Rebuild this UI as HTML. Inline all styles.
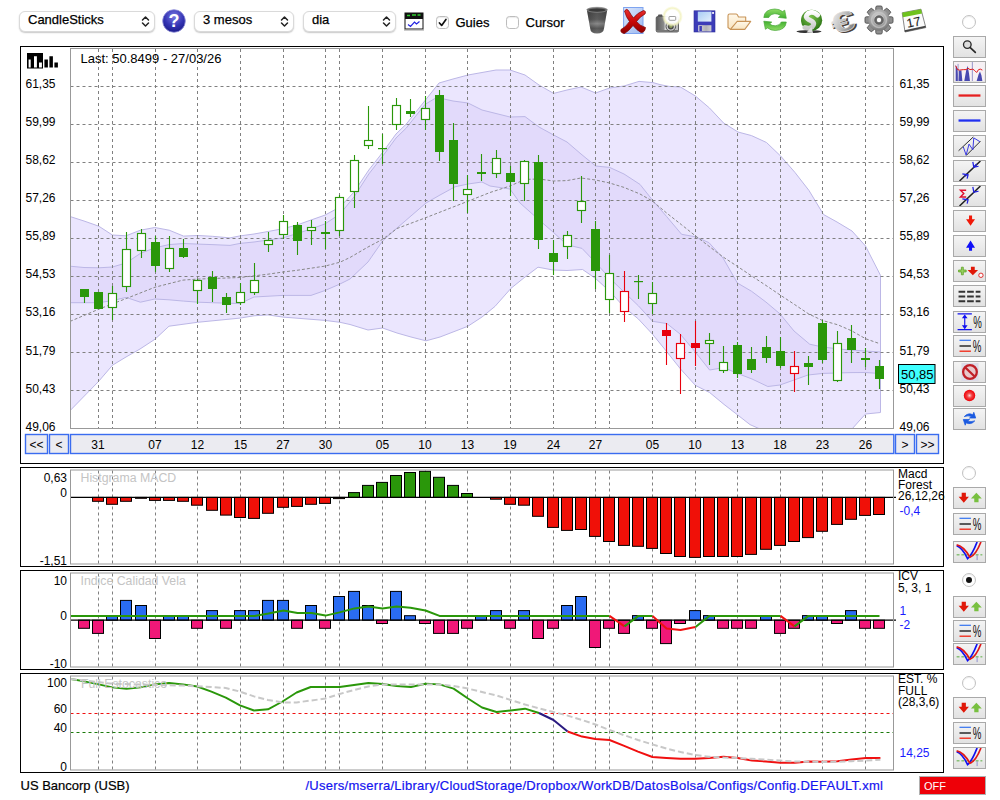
<!DOCTYPE html>
<html><head><meta charset="utf-8"><title>US Bancorp (USB)</title>
<style>
html,body{margin:0;padding:0;background:#fff;}
body{width:1000px;height:800px;position:relative;overflow:hidden;font-family:"Liberation Sans",sans-serif;font-size:13px;color:#000;}
.abs{position:absolute;}
.sel{position:absolute;top:11px;height:18.500px;border:1px solid #dadada;border-radius:6px;background:#fff;box-shadow:0 1px 1.5px rgba(0,0,0,.22);font-size:13px;line-height:18.500px;-webkit-text-stroke:0.25px #000;}
.sel span{position:absolute;left:8px;top:-1px;white-space:nowrap;}
.sel svg{position:absolute;right:4px;top:3px;}
.cb{position:absolute;top:15.5px;width:11.200px;height:11.200px;border:1px solid #bdbdbd;border-radius:3.5px;background:#fff;box-shadow:inset 0 1px 1px rgba(0,0,0,.08);}
.lbl{position:absolute;top:14.500px;font-size:13px;line-height:16px;-webkit-text-stroke:0.25px #000;white-space:nowrap;}
.radio{position:absolute;width:12px;height:12px;border:1px solid #c2c2c2;border-radius:50%;background:#fff;box-shadow:inset 0 1px 1px rgba(0,0,0,.08);}
.sb{position:absolute;left:953px;width:31px;height:20px;border:1px solid #a9a9a9;background:linear-gradient(#f4f4f4,#e2e2e2);overflow:hidden;}
.sb svg{position:absolute;left:0;top:0;}
.status{position:absolute;top:778px;font-size:13px;line-height:15px;white-space:nowrap;-webkit-text-stroke:0.2px;}
</style></head>
<body>
<div class="sel" style="left:19px;width:134px"><span>CandleSticks</span><svg width="9" height="13" viewBox="0 0 9 13"><path d="M1.5 5L4.5 2L7.5 5M1.5 8L4.5 11L7.5 8" fill="none" stroke="#222" stroke-width="1.5" stroke-linecap="round" stroke-linejoin="round"/></svg></div>
<svg class="abs" style="left:162px;top:9px" width="24" height="24" viewBox="0 0 24 24"><defs><radialGradient id="hg" cx="50%" cy="30%" r="70%"><stop offset="0" stop-color="#7a7ae0"/><stop offset="0.6" stop-color="#3434b4"/><stop offset="1" stop-color="#1c1c8a"/></radialGradient></defs><circle cx="12" cy="12" r="11.3" fill="url(#hg)" stroke="#8a8ad8" stroke-width="0.8"/><text x="12" y="18" text-anchor="middle" font-family="Liberation Sans, sans-serif" font-weight="bold" font-size="18" fill="#fff">?</text></svg>
<div class="sel" style="left:194px;width:98px"><span>3 mesos</span><svg width="9" height="13" viewBox="0 0 9 13"><path d="M1.5 5L4.5 2L7.5 5M1.5 8L4.5 11L7.5 8" fill="none" stroke="#222" stroke-width="1.5" stroke-linecap="round" stroke-linejoin="round"/></svg></div>
<div class="sel" style="left:303px;width:91px"><span>dia</span><svg width="9" height="13" viewBox="0 0 9 13"><path d="M1.5 5L4.5 2L7.5 5M1.5 8L4.5 11L7.5 8" fill="none" stroke="#222" stroke-width="1.5" stroke-linecap="round" stroke-linejoin="round"/></svg></div>
<svg class="abs" style="left:404px;top:12px" width="20" height="19" viewBox="0 0 20 19"><rect x="0.5" y="0.5" width="19" height="5.5" fill="#111"/><path d="M3 3.5h3M8 3h4M13.5 3h3" stroke="#2fd02f" stroke-width="1.4"/><rect x="1" y="6.5" width="18" height="10.5" fill="#fff" stroke="#111" stroke-width="1"/><path d="M4 12.5l2.5 2l4-4.5l2 2l3-2.5" fill="none" stroke="#2020e0" stroke-width="1.2"/><rect x="0" y="17.5" width="20" height="1" fill="#999"/></svg>
<div class="cb" style="left:435.5px"><svg width="11.2" height="11.2" viewBox="0 0 12 12" style="position:absolute;left:0;top:0"><path d="M2.6 6.4L5 9L9.6 2.6" fill="none" stroke="#111" stroke-width="1.8" stroke-linecap="round" stroke-linejoin="round"/></svg></div>
<div class="lbl" style="left:455.5px">Guies</div>
<div class="cb" style="left:505.5px"></div>
<div class="lbl" style="left:525.5px">Cursor</div>
<!-- trash -->
<svg class="abs" style="left:585px;top:6px" width="24" height="29" viewBox="0 0 24 29"><defs><linearGradient id="tg" x1="0" y1="0" x2="0" y2="1"><stop offset="0" stop-color="#4c4c4c"/><stop offset="0.45" stop-color="#5e5e5e"/><stop offset="0.62" stop-color="#8a8a8a"/><stop offset="0.8" stop-color="#5a5a5a"/><stop offset="1" stop-color="#6e6e6e"/></linearGradient><linearGradient id="tg2" x1="0" x2="1"><stop offset="0" stop-color="#000" stop-opacity="0.25"/><stop offset="0.5" stop-color="#000" stop-opacity="0"/><stop offset="1" stop-color="#000" stop-opacity="0.2"/></linearGradient></defs><path d="M1.800 3.500Q12 0 22.300 3.500L19 22.500Q18.500 27.500 12 27.500Q5.500 27.500 5.200 22.500Z" fill="url(#tg)"/><path d="M1.800 3.500Q12 0 22.300 3.500L19 22.500Q18.500 27.500 12 27.500Q5.500 27.500 5.200 22.500Z" fill="url(#tg2)"/><ellipse cx="12.050" cy="3.800" rx="10.200" ry="2.500" fill="#6c6c6c" stroke="#8c8c8c" stroke-width="0.7"/><ellipse cx="12.050" cy="4.100" rx="8.600" ry="1.700" fill="#3a3a3a"/></svg>
<!-- red X on doc -->
<svg class="abs" style="left:619px;top:6px" width="28" height="29" viewBox="0 0 28 29"><defs><linearGradient id="dgr" x1="0" y1="0" x2="1" y2="1"><stop offset="0" stop-color="#dce8fc"/><stop offset="1" stop-color="#9cb8f0"/></linearGradient><linearGradient id="xg" x1="0" y1="0" x2="0" y2="1"><stop offset="0" stop-color="#e83030"/><stop offset="0.5" stop-color="#c80808"/><stop offset="1" stop-color="#8c0000"/></linearGradient></defs><rect x="4.600" y="1.500" width="19.400" height="26" fill="url(#dgr)" stroke="#7ea4f0" stroke-width="1"/><path d="M5.500 5Q7.500 2 9.500 4.500Q12 9 14.500 12Q18 7 24.500 4.500Q27.500 5 26 8Q21 10.500 17.500 15.500Q21 20 26.500 21.500Q26 26.500 22 26.500Q17.500 24 14 19.500Q10 25 5.500 27.500Q1 27 2 23.500Q7 21 10.500 15.500Q7 11 5.500 5Z" fill="url(#xg)" stroke="#7a0000" stroke-width="0.7" stroke-linejoin="round"/></svg>
<!-- camera -->
<svg class="abs" style="left:655px;top:5px" width="30" height="30" viewBox="0 0 30 30"><defs><radialGradient id="fg"><stop offset="0" stop-color="#fff"/><stop offset="0.62" stop-color="#ffffff" stop-opacity="0.95"/><stop offset="0.8" stop-color="#f2f2c0" stop-opacity="0.9"/><stop offset="1" stop-color="#f4f4c0" stop-opacity="0"/></radialGradient><linearGradient id="cb" x1="0" x2="1"><stop offset="0" stop-color="#5c5c5c"/><stop offset="0.35" stop-color="#8c8c8c"/><stop offset="0.4" stop-color="#d8d8d8"/><stop offset="1" stop-color="#bcbcbc"/></linearGradient></defs><rect x="1.200" y="11.500" width="22.300" height="15.500" rx="1.500" fill="url(#cb)" stroke="#555" stroke-width="0.9"/><path d="M2.500 11.500L3.500 9.500H7L8 11.500Z" fill="#555"/><rect x="1.200" y="25" width="22.300" height="2" fill="#777"/><circle cx="15.800" cy="21.400" r="4.800" fill="#d0d0d0" stroke="#555" stroke-width="1"/><circle cx="15.800" cy="21.400" r="3" fill="#4a4a4a"/><circle cx="15.800" cy="21.400" r="1.600" fill="#8a9a5a"/><circle cx="17.400" cy="11.500" r="10.500" fill="url(#fg)"/><rect x="14" y="11.500" width="6.700" height="3.800" rx="0.800" fill="#fff" stroke="#777" stroke-width="0.7"/></svg>
<!-- floppy -->
<svg class="abs" style="left:693px;top:10px" width="23" height="23" viewBox="0 0 23 23"><defs><linearGradient id="fl" x1="0" y1="0" x2="1" y2="1"><stop offset="0" stop-color="#a8ccf4"/><stop offset="1" stop-color="#e4f0fc"/></linearGradient><linearGradient id="fs" x1="0" x2="1"><stop offset="0" stop-color="#d8d8dc"/><stop offset="0.6" stop-color="#b0b0b4"/><stop offset="1" stop-color="#d0d0d4"/></linearGradient></defs><rect x="1" y="0.800" width="21" height="21.200" fill="#3c3cb8" stroke="#2c2c98" stroke-width="0.6"/><rect x="4.800" y="1.600" width="13.600" height="10" fill="url(#fl)"/><rect x="5.200" y="15.200" width="13.200" height="6.300" fill="url(#fs)"/><rect x="6.400" y="16" width="2.500" height="5" fill="#3c3cb8"/><rect x="19.200" y="2" width="1.700" height="1.900" fill="#fff"/></svg>
<!-- folder -->
<svg class="abs" style="left:727px;top:12.500px" width="25" height="18" viewBox="0 0 25 18"><defs><linearGradient id="fo" x1="0" y1="0" x2="0" y2="1"><stop offset="0" stop-color="#fff8ea"/><stop offset="1" stop-color="#f8e4c0"/></linearGradient></defs><path d="M3.400 16.400L1 14.500V2.800Q1 1 2.600 1H9.300Q10.300 1 11.500 4H18.700V8.400" fill="url(#fo)" stroke="#c89458" stroke-width="1.1" stroke-linejoin="round"/><path d="M10.200 8.400H23.700L17.800 16.400H3.400Z" fill="url(#fo)" stroke="#c89458" stroke-width="1.1" stroke-linejoin="round"/></svg>
<!-- refresh green -->
<svg class="abs" style="left:762px;top:7px" width="27" height="26" viewBox="0 0 27 26"><defs><linearGradient id="rg" x1="0" y1="0" x2="0" y2="1"><stop offset="0" stop-color="#8fdc66"/><stop offset="1" stop-color="#3fae2e"/></linearGradient></defs><g fill="url(#rg)" stroke="#46a636" stroke-width="0.7" stroke-linejoin="round"><path d="M1.8 10.500Q2.500 2.300 12.800 2Q17.500 2 20.500 4.600L22.700 3.200L24.300 11.300L16.300 10.400L18.600 8.500Q16 6.600 12.800 6.700Q8 7 6.800 10.500Z"/><path d="M1.8 10.500Q2.500 2.300 12.800 2Q17.500 2 20.500 4.600L22.700 3.200L24.300 11.300L16.300 10.400L18.600 8.500Q16 6.600 12.800 6.700Q8 7 6.800 10.500Z" transform="rotate(180 13.050 12.750)"/></g></svg>
<!-- dollar ball -->
<svg class="abs" style="left:796px;top:8px" width="28" height="26" viewBox="0 0 28 26"><defs><radialGradient id="dg" cx="45%" cy="35%" r="65%"><stop offset="0" stop-color="#7cc44c"/><stop offset="1" stop-color="#2c7416"/></radialGradient><linearGradient id="sg" x1="0" y1="0" x2="0" y2="1"><stop offset="0" stop-color="#ffffff"/><stop offset="1" stop-color="#c8c8c8"/></linearGradient></defs><ellipse cx="13" cy="23.600" rx="12.500" ry="1.500" fill="#111" opacity="0.85"/><circle cx="15.600" cy="12.300" r="10.600" fill="url(#dg)"/><path d="M21.500 7Q17 2.500 12 5.500Q7.500 9.500 14.500 12.500Q20 15 16 19Q13 21 9 19.500" fill="none" stroke="url(#sg)" stroke-width="5" stroke-linecap="round"/><path d="M10.500 24.500l5-5.500l1.500 6z" fill="#ddd"/></svg>
<!-- euro -->
<svg class="abs" style="left:829px;top:5px" width="32" height="32" viewBox="0 0 32 32"><defs><linearGradient id="eg" x1="0" y1="0" x2="1" y2="1"><stop offset="0" stop-color="#ffffff"/><stop offset="0.45" stop-color="#c4c4c4"/><stop offset="1" stop-color="#606060"/></linearGradient></defs><g transform="rotate(-16 16 16)"><text transform="translate(3.500 27) scale(1.42 0.960)" font-family="Liberation Sans, sans-serif" font-weight="bold" font-size="29" fill="#4a423c" stroke="#4a423c" stroke-width="1.2">€</text><text transform="translate(2.300 25.800) scale(1.42 0.960)" font-family="Liberation Sans, sans-serif" font-weight="bold" font-size="29" fill="url(#eg)" stroke="#dcdcdc" stroke-width="0.600">€</text></g></svg>
<!-- gear -->
<svg class="abs" style="left:864px;top:5px" width="30" height="30" viewBox="-15 -15 30 30"><defs><radialGradient id="gg" cx="45%" cy="35%" r="70%"><stop offset="0" stop-color="#d4d4d4"/><stop offset="0.6" stop-color="#a0a0a0"/><stop offset="1" stop-color="#6c6c6c"/></radialGradient></defs><g fill="#8e8e8e" stroke="#505050" stroke-width="0.9" stroke-linejoin="round"><rect x="-3.200" y="-14" width="6.400" height="8" rx="1.400"/><rect x="-3.200" y="-14" width="6.400" height="8" rx="1.400" transform="rotate(45)"/><rect x="-3.200" y="-14" width="6.400" height="8" rx="1.400" transform="rotate(90)"/><rect x="-3.200" y="-14" width="6.400" height="8" rx="1.400" transform="rotate(135)"/><rect x="-3.200" y="-14" width="6.400" height="8" rx="1.400" transform="rotate(180)"/><rect x="-3.200" y="-14" width="6.400" height="8" rx="1.400" transform="rotate(225)"/><rect x="-3.200" y="-14" width="6.400" height="8" rx="1.400" transform="rotate(270)"/><rect x="-3.200" y="-14" width="6.400" height="8" rx="1.400" transform="rotate(315)"/></g><circle r="10.800" fill="url(#gg)"/><circle r="7.500" fill="none" stroke="#c8c8c8" stroke-width="1.500" opacity="0.7"/><circle r="4.200" fill="#6a6a6a" stroke="#505050" stroke-width="0.8"/><circle r="2.200" fill="#fff"/></svg>
<!-- calendar -->
<svg class="abs" style="left:899px;top:6px" width="30" height="30" viewBox="0 0 30 30"><path d="M3.200 6.800L22 3.200L26.800 21.600L6 26Z" fill="#fbfbfb" stroke="#7a7a7a" stroke-width="0.9" stroke-linejoin="round"/><path d="M3.200 6.800L22 3.200L23.100 7.400L4 11.200Z" fill="#6fc21e"/><path d="M5.600 24.200L26.400 19.800L26.800 21.600L6 26Z" fill="#444"/><text transform="translate(8.600 21.800) rotate(-11)" font-family="Liberation Sans, sans-serif" font-size="12.500" fill="#1a1a1a" stroke="#1a1a1a" stroke-width="0.120">17</text></svg>
<svg class="abs" style="left:0;top:0" width="1000" height="800" viewBox="0 0 1000 800" font-family="Liberation Sans, sans-serif" font-size="12">
<defs>
<clipPath id="cm"><rect x="71" y="49" width="822" height="379"/></clipPath>
</defs>
<rect x="20.5" y="46.5" width="923" height="417.0" fill="#fff" stroke="#000" stroke-width="1"/>
<rect x="20.5" y="467.5" width="923" height="99.0" fill="#fff" stroke="#000" stroke-width="1"/>
<rect x="20.5" y="570.5" width="923" height="99.0" fill="#fff" stroke="#000" stroke-width="1"/>
<rect x="20.5" y="673.5" width="923" height="99.0" fill="#fff" stroke="#000" stroke-width="1"/>
<g clip-path="url(#cm)">
<polygon points="70.0,216.5 84.0,221.0 98.8,226.2 112.4,235.0 126.0,235.8 140.4,230.2 154.8,227.5 169.2,230.2 183.6,236.1 198.0,235.5 212.4,236.3 230.0,237.9 240.0,235.9 254.0,234.0 268.0,231.5 283.0,228.7 297.0,225.0 311.0,220.0 325.0,215.1 340.0,207.0 354.0,192.0 368.8,170.0 382.8,152.2 396.0,134.0 406.3,124.0 425.0,100.6 439.0,83.0 453.0,79.0 468.0,75.0 482.0,72.5 496.0,70.0 510.0,70.0 525.0,75.0 539.0,85.0 553.6,93.4 567.0,90.0 581.0,87.0 595.6,93.0 609.6,88.0 624.0,86.0 639.0,81.4 653.0,82.6 660.0,84.6 669.0,86.4 680.4,87.0 695.4,96.0 709.5,108.0 723.6,123.0 738.0,132.0 751.5,135.6 766.5,142.5 780.6,156.0 795.0,172.5 809.0,190.5 823.5,214.5 837.0,222.0 852.0,231.0 865.5,246.0 880.5,275.4 880.5,412.5 865.5,414.0 860.0,420.0 852.0,429.0 837.0,430.0 822.0,428.5 800.0,433.0 765.0,431.0 757.0,427.7 750.0,424.6 737.7,415.0 724.0,404.4 709.6,392.5 695.4,385.4 680.4,368.8 667.0,352.0 652.6,334.3 638.4,319.0 624.0,307.0 610.0,291.6 595.6,278.5 582.6,269.5 567.0,270.5 553.0,270.0 538.0,267.2 525.0,277.0 511.0,288.3 495.0,306.4 482.0,317.0 467.8,326.3 453.0,332.0 440.0,337.0 426.0,340.8 411.0,337.0 397.0,333.0 382.6,328.0 368.0,330.0 350.0,324.5 340.0,322.3 325.0,320.4 283.0,317.1 268.0,314.9 254.0,315.8 240.0,318.1 197.5,322.3 169.0,326.2 155.0,339.2 140.0,349.0 126.0,357.0 112.5,365.2 98.5,381.5 70.0,410.7" fill="#ebe6fe"/>
<polygon points="70.0,266.2 84.0,267.5 98.8,267.8 112.4,267.0 126.0,263.0 140.4,253.4 154.8,247.8 169.0,244.6 183.6,243.5 198.0,244.1 212.0,244.6 230.0,245.4 240.0,243.4 254.0,242.0 268.0,240.0 283.0,237.8 297.0,233.6 311.0,229.0 325.0,223.9 340.0,214.0 354.0,197.0 368.8,174.0 382.8,156.0 396.0,138.0 406.3,128.0 425.0,104.4 434.4,98.8 439.0,96.5 444.0,99.0 453.0,101.0 468.0,103.0 482.0,110.0 496.0,113.5 510.0,117.0 525.0,116.6 539.0,127.0 553.6,135.0 567.0,142.0 581.0,154.0 595.6,166.0 609.6,167.4 624.0,174.0 640.0,184.4 652.3,199.9 666.6,216.5 681.6,234.3 695.0,236.7 708.9,242.6 723.0,258.0 737.4,283.0 751.6,291.3 765.9,302.0 780.0,313.9 794.0,331.0 809.7,344.2 822.5,347.0 844.0,349.5 865.3,351.0 880.5,352.0 880.5,373.5 865.3,372.5 851.0,372.6 823.0,373.4 808.0,375.0 794.0,380.0 780.0,385.0 767.8,386.5 752.0,379.0 737.7,373.5 724.0,367.6 709.6,370.0 695.4,352.1 680.4,334.3 667.0,323.6 652.6,321.3 638.4,305.8 624.0,292.0 610.0,278.5 596.0,263.0 582.0,248.4 567.0,244.8 553.0,232.0 538.0,219.0 520.0,203.0 510.0,189.0 490.0,186.0 482.0,182.0 468.0,184.0 455.0,186.8 440.0,195.0 426.0,203.0 397.0,228.0 382.6,241.0 368.0,262.0 350.0,279.0 340.0,284.0 325.0,290.5 311.0,295.4 283.0,295.4 254.0,297.0 240.0,303.5 230.0,303.3 212.0,302.7 198.0,302.2 183.6,301.1 169.0,299.8 154.8,299.0 140.4,302.2 126.0,297.4 112.4,300.6 98.8,302.7 70.0,302.7" fill="#e2dafb"/>
<polyline points="70.0,216.5 84.0,221.0 98.8,226.2 112.4,235.0 126.0,235.8 140.4,230.2 154.8,227.5 169.2,230.2 183.6,236.1 198.0,235.5 212.4,236.3 230.0,237.9 240.0,235.9 254.0,234.0 268.0,231.5 283.0,228.7 297.0,225.0 311.0,220.0 325.0,215.1 340.0,207.0 354.0,192.0 368.8,170.0 382.8,152.2 396.0,134.0 406.3,124.0 425.0,100.6 439.0,83.0 453.0,79.0 468.0,75.0 482.0,72.5 496.0,70.0 510.0,70.0 525.0,75.0 539.0,85.0 553.6,93.4 567.0,90.0 581.0,87.0 595.6,93.0 609.6,88.0 624.0,86.0 639.0,81.4 653.0,82.6 660.0,84.6 669.0,86.4 680.4,87.0 695.4,96.0 709.5,108.0 723.6,123.0 738.0,132.0 751.5,135.6 766.5,142.5 780.6,156.0 795.0,172.5 809.0,190.5 823.5,214.5 837.0,222.0 852.0,231.0 865.5,246.0 880.5,275.4" fill="none" stroke="#bcb7e6" stroke-width="1"/>
<polyline points="70.0,266.2 84.0,267.5 98.8,267.8 112.4,267.0 126.0,263.0 140.4,253.4 154.8,247.8 169.0,244.6 183.6,243.5 198.0,244.1 212.0,244.6 230.0,245.4 240.0,243.4 254.0,242.0 268.0,240.0 283.0,237.8 297.0,233.6 311.0,229.0 325.0,223.9 340.0,214.0 354.0,197.0 368.8,174.0 382.8,156.0 396.0,138.0 406.3,128.0 425.0,104.4 434.4,98.8 439.0,96.5 444.0,99.0 453.0,101.0 468.0,103.0 482.0,110.0 496.0,113.5 510.0,117.0 525.0,116.6 539.0,127.0 553.6,135.0 567.0,142.0 581.0,154.0 595.6,166.0 609.6,167.4 624.0,174.0 640.0,184.4 652.3,199.9 666.6,216.5 681.6,234.3 695.0,236.7 708.9,242.6 723.0,258.0 737.4,283.0 751.6,291.3 765.9,302.0 780.0,313.9 794.0,331.0 809.7,344.2 822.5,347.0 844.0,349.5 865.3,351.0 880.5,352.0" fill="none" stroke="#bcb7e6" stroke-width="1"/>
<polyline points="70.0,302.7 98.8,302.7 112.4,300.6 126.0,297.4 140.4,302.2 154.8,299.0 169.0,299.8 183.6,301.1 198.0,302.2 212.0,302.7 230.0,303.3 240.0,303.5 254.0,297.0 283.0,295.4 311.0,295.4 325.0,290.5 340.0,284.0 350.0,279.0 368.0,262.0 382.6,241.0 397.0,228.0 426.0,203.0 440.0,195.0 455.0,186.8 468.0,184.0 482.0,182.0 490.0,186.0 510.0,189.0 520.0,203.0 538.0,219.0 553.0,232.0 567.0,244.8 582.0,248.4 596.0,263.0 610.0,278.5 624.0,292.0 638.4,305.8 652.6,321.3 667.0,323.6 680.4,334.3 695.4,352.1 709.6,370.0 724.0,367.6 737.7,373.5 752.0,379.0 767.8,386.5 780.0,385.0 794.0,380.0 808.0,375.0 823.0,373.4 851.0,372.6 865.3,372.5 880.5,373.5" fill="none" stroke="#bcb7e6" stroke-width="1"/>
<polyline points="70.0,410.7 98.5,381.5 112.5,365.2 126.0,357.0 140.0,349.0 155.0,339.2 169.0,326.2 197.5,322.3 240.0,318.1 254.0,315.8 268.0,314.9 283.0,317.1 325.0,320.4 340.0,322.3 350.0,324.5 368.0,330.0 382.6,328.0 397.0,333.0 411.0,337.0 426.0,340.8 440.0,337.0 453.0,332.0 467.8,326.3 482.0,317.0 495.0,306.4 511.0,288.3 525.0,277.0 538.0,267.2 553.0,270.0 567.0,270.5 582.6,269.5 595.6,278.5 610.0,291.6 624.0,307.0 638.4,319.0 652.6,334.3 667.0,352.0 680.4,368.8 695.4,385.4 709.6,392.5 724.0,404.4 737.7,415.0 750.0,424.6 757.0,427.7 765.0,431.0 800.0,433.0 822.0,428.5 837.0,430.0 852.0,429.0 860.0,420.0 865.5,414.0 880.5,412.5" fill="none" stroke="#bcb7e6" stroke-width="1"/>
<line x1="880.5" y1="275.4" x2="880.5" y2="412.5" stroke="#bcb7e6" stroke-width="1"/>
</g>
<path d="M98.5 49V428M112.5 49V428M155.5 49V428M197.5 49V428M240.5 49V428M283.5 49V428M325.5 49V428M339.5 49V428M382.5 49V428M425.5 49V428M467.5 49V428M510.5 49V428M553.5 49V428M595.5 49V428M609.5 49V428M652.5 49V428M695.5 49V428M737.5 49V428M780.5 49V428M822.5 49V428M865.5 49V428M70.5 86.5H893.5M70.5 124.5H893.5M70.5 162.5H893.5M70.5 200.5H893.5M70.5 238.5H893.5M70.5 276.5H893.5M70.5 314.5H893.5M70.5 352.5H893.5M70.5 390.5H893.5" stroke="#808080" stroke-width="1" stroke-dasharray="3 3" fill="none"/>
<polyline points="70.0,321.4 98.5,309.3 126.0,298.6 155.0,287.2 183.0,280.1 197.5,279.1 240.0,277.5 268.0,274.2 283.0,272.0 297.0,270.3 325.0,266.1 340.0,262.2 350.0,257.5 368.0,247.0 382.6,239.3 397.0,228.5 426.0,217.6 467.8,201.3 490.0,192.5 510.0,186.0 525.0,179.4 539.0,179.0 553.6,181.0 567.0,180.6 581.0,178.0 595.6,180.0 609.6,183.0 624.0,187.4 640.0,194.0 652.3,201.0 666.6,213.0 681.6,224.8 695.0,235.5 708.9,246.2 723.0,256.9 737.4,266.4 751.6,275.9 765.9,285.4 780.0,294.9 794.4,304.4 808.6,313.9 822.5,320.5 837.8,324.8 851.0,330.5 865.8,338.8 879.8,343.7" fill="none" stroke="#888" stroke-width="1" stroke-dasharray="3 2" clip-path="url(#cm)"/>
<line x1="84.5" y1="289" x2="84.5" y2="303" stroke="#2a970a" stroke-width="1.1"/>
<rect x="80" y="289" width="9" height="8" fill="#2a970a"/>
<line x1="98.5" y1="292" x2="98.5" y2="309" stroke="#2a970a" stroke-width="1.1"/>
<rect x="94" y="292" width="9" height="17" fill="#2a970a"/>
<line x1="112.5" y1="286" x2="112.5" y2="320" stroke="#2a970a" stroke-width="1.1"/>
<rect x="108.5" y="293.5" width="8" height="14.0" fill="#fff" stroke="#2a970a" stroke-width="1.15"/>
<line x1="126.5" y1="232" x2="126.5" y2="292" stroke="#2a970a" stroke-width="1.1"/>
<rect x="122.5" y="249.5" width="8" height="37.0" fill="#fff" stroke="#2a970a" stroke-width="1.15"/>
<line x1="141.5" y1="229" x2="141.5" y2="258" stroke="#2a970a" stroke-width="1.1"/>
<rect x="137.5" y="233.5" width="8" height="17.0" fill="#fff" stroke="#2a970a" stroke-width="1.15"/>
<line x1="155.5" y1="236" x2="155.5" y2="272" stroke="#2a970a" stroke-width="1.1"/>
<rect x="151" y="242" width="9" height="24" fill="#2a970a"/>
<line x1="169.5" y1="236" x2="169.5" y2="272" stroke="#2a970a" stroke-width="1.1"/>
<rect x="165.5" y="248.5" width="8" height="20.0" fill="#fff" stroke="#2a970a" stroke-width="1.15"/>
<line x1="183.5" y1="239" x2="183.5" y2="258" stroke="#2a970a" stroke-width="1.1"/>
<rect x="179" y="248" width="9" height="9" fill="#2a970a"/>
<line x1="197.5" y1="279" x2="197.5" y2="304" stroke="#2a970a" stroke-width="1.1"/>
<rect x="193.5" y="280.5" width="8" height="10.0" fill="#fff" stroke="#2a970a" stroke-width="1.15"/>
<line x1="212.5" y1="271" x2="212.5" y2="302" stroke="#2a970a" stroke-width="1.1"/>
<rect x="208" y="277" width="9" height="12" fill="#2a970a"/>
<line x1="226.5" y1="293" x2="226.5" y2="313" stroke="#2a970a" stroke-width="1.1"/>
<rect x="222" y="297" width="9" height="8" fill="#2a970a"/>
<line x1="240.5" y1="283" x2="240.5" y2="305" stroke="#2a970a" stroke-width="1.1"/>
<rect x="236.5" y="292.5" width="8" height="10.0" fill="#fff" stroke="#2a970a" stroke-width="1.15"/>
<line x1="254.5" y1="263" x2="254.5" y2="295" stroke="#2a970a" stroke-width="1.1"/>
<rect x="250.5" y="280.5" width="8" height="12.0" fill="#fff" stroke="#2a970a" stroke-width="1.15"/>
<line x1="268.5" y1="232" x2="268.5" y2="252" stroke="#2a970a" stroke-width="1.1"/>
<rect x="264.5" y="240.5" width="8" height="4.0" fill="#fff" stroke="#2a970a" stroke-width="1.15"/>
<line x1="283.5" y1="215" x2="283.5" y2="239" stroke="#2a970a" stroke-width="1.1"/>
<rect x="279.5" y="221.5" width="8" height="13.0" fill="#fff" stroke="#2a970a" stroke-width="1.15"/>
<line x1="297.5" y1="222" x2="297.5" y2="255" stroke="#2a970a" stroke-width="1.1"/>
<rect x="293" y="225" width="9" height="16" fill="#2a970a"/>
<line x1="311.5" y1="220" x2="311.5" y2="245" stroke="#2a970a" stroke-width="1.1"/>
<rect x="307.5" y="227.5" width="8" height="3.0" fill="#fff" stroke="#2a970a" stroke-width="1.15"/>
<line x1="325.5" y1="221" x2="325.5" y2="249" stroke="#2a970a" stroke-width="1.1"/>
<rect x="321" y="232" width="9" height="2" fill="#2a970a"/>
<line x1="339.5" y1="195" x2="339.5" y2="236" stroke="#2a970a" stroke-width="1.1"/>
<rect x="335.5" y="197.5" width="8" height="33.0" fill="#fff" stroke="#2a970a" stroke-width="1.15"/>
<line x1="354.5" y1="155" x2="354.5" y2="208" stroke="#2a970a" stroke-width="1.1"/>
<rect x="350.5" y="160.5" width="8" height="31.0" fill="#fff" stroke="#2a970a" stroke-width="1.15"/>
<line x1="368.5" y1="106" x2="368.5" y2="149" stroke="#2a970a" stroke-width="1.1"/>
<rect x="364.5" y="140.5" width="8" height="5.0" fill="#fff" stroke="#2a970a" stroke-width="1.15"/>
<line x1="382.5" y1="134" x2="382.5" y2="164" stroke="#2a970a" stroke-width="1.1"/>
<rect x="378" y="148" width="9" height="1.2" fill="#2a970a"/>
<line x1="396.5" y1="98" x2="396.5" y2="130" stroke="#2a970a" stroke-width="1.1"/>
<rect x="392.5" y="105.5" width="8" height="19.0" fill="#fff" stroke="#2a970a" stroke-width="1.15"/>
<line x1="410.5" y1="99" x2="410.5" y2="117" stroke="#2a970a" stroke-width="1.1"/>
<rect x="406" y="111" width="9" height="3" fill="#2a970a"/>
<line x1="425.5" y1="96" x2="425.5" y2="130" stroke="#2a970a" stroke-width="1.1"/>
<rect x="421.5" y="108.5" width="8" height="11.0" fill="#fff" stroke="#2a970a" stroke-width="1.15"/>
<line x1="439.5" y1="90" x2="439.5" y2="161" stroke="#2a970a" stroke-width="1.1"/>
<rect x="435" y="95" width="9" height="57" fill="#2a970a"/>
<line x1="453.5" y1="123" x2="453.5" y2="201" stroke="#2a970a" stroke-width="1.1"/>
<rect x="449" y="140" width="9" height="44" fill="#2a970a"/>
<line x1="467.5" y1="175" x2="467.5" y2="213" stroke="#2a970a" stroke-width="1.1"/>
<rect x="463.5" y="189.5" width="8" height="5.0" fill="#fff" stroke="#2a970a" stroke-width="1.15"/>
<line x1="481.5" y1="154" x2="481.5" y2="181" stroke="#2a970a" stroke-width="1.1"/>
<rect x="477" y="172" width="9" height="2" fill="#2a970a"/>
<line x1="496.5" y1="150" x2="496.5" y2="178" stroke="#2a970a" stroke-width="1.1"/>
<rect x="492.5" y="158.5" width="8" height="15.0" fill="#fff" stroke="#2a970a" stroke-width="1.15"/>
<line x1="510.5" y1="166" x2="510.5" y2="196" stroke="#2a970a" stroke-width="1.1"/>
<rect x="506" y="173" width="9" height="9" fill="#2a970a"/>
<line x1="524.5" y1="160" x2="524.5" y2="201" stroke="#2a970a" stroke-width="1.1"/>
<rect x="520.5" y="161.5" width="8" height="22.0" fill="#fff" stroke="#2a970a" stroke-width="1.15"/>
<line x1="538.5" y1="155" x2="538.5" y2="249" stroke="#2a970a" stroke-width="1.1"/>
<rect x="534" y="162" width="9" height="78" fill="#2a970a"/>
<line x1="553.5" y1="240" x2="553.5" y2="275" stroke="#2a970a" stroke-width="1.1"/>
<rect x="549" y="253" width="9" height="9" fill="#2a970a"/>
<line x1="567.5" y1="231" x2="567.5" y2="259" stroke="#2a970a" stroke-width="1.1"/>
<rect x="563.5" y="235.5" width="8" height="11.0" fill="#fff" stroke="#2a970a" stroke-width="1.15"/>
<line x1="581.5" y1="176" x2="581.5" y2="223" stroke="#2a970a" stroke-width="1.1"/>
<rect x="577.5" y="201.5" width="8" height="9.0" fill="#fff" stroke="#2a970a" stroke-width="1.15"/>
<line x1="595.5" y1="221" x2="595.5" y2="289" stroke="#2a970a" stroke-width="1.1"/>
<rect x="591" y="229" width="9" height="42" fill="#2a970a"/>
<line x1="609.5" y1="255" x2="609.5" y2="313" stroke="#2a970a" stroke-width="1.1"/>
<rect x="605.5" y="273.5" width="8" height="26.0" fill="#fff" stroke="#2a970a" stroke-width="1.15"/>
<line x1="624.5" y1="271" x2="624.5" y2="322" stroke="#e8000d" stroke-width="1.1"/>
<rect x="620.5" y="291.5" width="8" height="20.0" fill="#fff" stroke="#e8000d" stroke-width="1.15"/>
<line x1="638.5" y1="275" x2="638.5" y2="299" stroke="#2a970a" stroke-width="1.1"/>
<rect x="634" y="281" width="9" height="1.2" fill="#2a970a"/>
<line x1="652.5" y1="282" x2="652.5" y2="314" stroke="#2a970a" stroke-width="1.1"/>
<rect x="648.5" y="293.5" width="8" height="10.0" fill="#fff" stroke="#2a970a" stroke-width="1.15"/>
<line x1="666.5" y1="323" x2="666.5" y2="365" stroke="#e8000d" stroke-width="1.1"/>
<rect x="662" y="330" width="9" height="6" fill="#e8000d"/>
<line x1="680.5" y1="334" x2="680.5" y2="394" stroke="#e8000d" stroke-width="1.1"/>
<rect x="676.5" y="343.5" width="8" height="15.0" fill="#fff" stroke="#e8000d" stroke-width="1.15"/>
<line x1="695.5" y1="321" x2="695.5" y2="366" stroke="#e8000d" stroke-width="1.1"/>
<rect x="691" y="343" width="9" height="5" fill="#e8000d"/>
<line x1="709.5" y1="333" x2="709.5" y2="365" stroke="#2a970a" stroke-width="1.1"/>
<rect x="705.5" y="340.5" width="8" height="3.0" fill="#fff" stroke="#2a970a" stroke-width="1.15"/>
<line x1="723.5" y1="346" x2="723.5" y2="373" stroke="#2a970a" stroke-width="1.1"/>
<rect x="719.5" y="362.5" width="8" height="8.0" fill="#fff" stroke="#2a970a" stroke-width="1.15"/>
<line x1="737.5" y1="342" x2="737.5" y2="378" stroke="#2a970a" stroke-width="1.1"/>
<rect x="733" y="345" width="9" height="29" fill="#2a970a"/>
<line x1="751.5" y1="347" x2="751.5" y2="373" stroke="#2a970a" stroke-width="1.1"/>
<rect x="747" y="359" width="9" height="11" fill="#2a970a"/>
<line x1="766.5" y1="336" x2="766.5" y2="363" stroke="#2a970a" stroke-width="1.1"/>
<rect x="762" y="347" width="9" height="11" fill="#2a970a"/>
<line x1="780.5" y1="337" x2="780.5" y2="368" stroke="#2a970a" stroke-width="1.1"/>
<rect x="776" y="351" width="9" height="15" fill="#2a970a"/>
<line x1="794.5" y1="351" x2="794.5" y2="392" stroke="#e8000d" stroke-width="1.1"/>
<rect x="790.5" y="366.5" width="8" height="7.0" fill="#fff" stroke="#e8000d" stroke-width="1.15"/>
<line x1="808.5" y1="356" x2="808.5" y2="385" stroke="#2a970a" stroke-width="1.1"/>
<rect x="804" y="363" width="9" height="4" fill="#2a970a"/>
<line x1="822.5" y1="320" x2="822.5" y2="363" stroke="#2a970a" stroke-width="1.1"/>
<rect x="818" y="323" width="9" height="37" fill="#2a970a"/>
<line x1="837.5" y1="331" x2="837.5" y2="382" stroke="#2a970a" stroke-width="1.1"/>
<rect x="833.5" y="343.5" width="8" height="37.0" fill="#fff" stroke="#2a970a" stroke-width="1.15"/>
<line x1="851.5" y1="325" x2="851.5" y2="363" stroke="#2a970a" stroke-width="1.1"/>
<rect x="847" y="338" width="9" height="12" fill="#2a970a"/>
<line x1="865.5" y1="348" x2="865.5" y2="367" stroke="#2a970a" stroke-width="1.1"/>
<rect x="861" y="358" width="9" height="2" fill="#2a970a"/>
<line x1="879.5" y1="360" x2="879.5" y2="389" stroke="#2a970a" stroke-width="1.1"/>
<rect x="875" y="366" width="9" height="13" fill="#2a970a"/>
<rect x="70.5" y="48.5" width="823.0" height="380.0" fill="none" stroke="#999" stroke-width="1"/>
<text x="25.5" y="87.5">61,35</text>
<text x="899.5" y="87.5">61,35</text>
<text x="25.5" y="125.6">59,99</text>
<text x="899.5" y="125.6">59,99</text>
<text x="25.5" y="163.8">58,62</text>
<text x="899.5" y="163.8">58,62</text>
<text x="25.5" y="201.9">57,26</text>
<text x="899.5" y="201.9">57,26</text>
<text x="25.5" y="240.1">55,89</text>
<text x="899.5" y="240.1">55,89</text>
<text x="25.5" y="278.2">54,53</text>
<text x="899.5" y="278.2">54,53</text>
<text x="25.5" y="316.3">53,16</text>
<text x="899.5" y="316.3">53,16</text>
<text x="25.5" y="354.5">51,79</text>
<text x="899.5" y="354.5">51,79</text>
<text x="25.5" y="392.6">50,43</text>
<text x="899.5" y="392.6">50,43</text>
<text x="25.5" y="430.8">49,06</text>
<text x="899.5" y="430.8">49,06</text>
<text x="80.5" y="62.5" font-size="13">Last: 50.8499 - 27/03/26</text>
<rect x="898.5" y="364.5" width="36.5" height="19" fill="#40ffff" stroke="#000" stroke-width="1"/>
<text x="901" y="379" font-size="13">50,85</text>
<path d="M27 53h16v15.5h-16z M44.4 59.4h3.5v8.1h-3.5z M49.4 56.2h3.5v11.3h-3.5z M54.4 62.5h3.5v5h-3.5z" fill="#000"/>
<path d="M28.6 59.4h2.1v8.1h-2.1z M34 56.2h2.9v11.3h-2.9z M39 62.5h2.9v5h-2.9z" fill="#fff"/>
<rect x="25.5" y="434.5" width="22.0" height="19" fill="#ebebf1" stroke="#3a6cf0" stroke-width="1.4"/>
<text x="36.5" y="449" text-anchor="middle">&lt;&lt;</text>
<rect x="49.5" y="434.5" width="19.0" height="19" fill="#ebebf1" stroke="#3a6cf0" stroke-width="1.4"/>
<text x="59.0" y="449" text-anchor="middle">&lt;</text>
<rect x="70.5" y="434.5" width="823.3" height="19" fill="#ebebf1" stroke="#3a6cf0" stroke-width="1.4"/>
<rect x="895.5" y="434.5" width="19.0" height="19" fill="#ebebf1" stroke="#3a6cf0" stroke-width="1.4"/>
<text x="905.0" y="449" text-anchor="middle">&gt;</text>
<rect x="916.5" y="434.5" width="22.0" height="19" fill="#ebebf1" stroke="#3a6cf0" stroke-width="1.4"/>
<text x="927.5" y="449" text-anchor="middle">&gt;&gt;</text>
<text x="98" y="449" text-anchor="middle">31</text>
<text x="155" y="449" text-anchor="middle">07</text>
<text x="197.5" y="449" text-anchor="middle">12</text>
<text x="240.5" y="449" text-anchor="middle">15</text>
<text x="283" y="449" text-anchor="middle">27</text>
<text x="325.5" y="449" text-anchor="middle">30</text>
<text x="382.5" y="449" text-anchor="middle">05</text>
<text x="425" y="449" text-anchor="middle">10</text>
<text x="467.5" y="449" text-anchor="middle">13</text>
<text x="510" y="449" text-anchor="middle">19</text>
<text x="553.5" y="449" text-anchor="middle">24</text>
<text x="595.5" y="449" text-anchor="middle">27</text>
<text x="652.5" y="449" text-anchor="middle">05</text>
<text x="695" y="449" text-anchor="middle">10</text>
<text x="737.5" y="449" text-anchor="middle">13</text>
<text x="780" y="449" text-anchor="middle">18</text>
<text x="822.5" y="449" text-anchor="middle">23</text>
<text x="865.5" y="449" text-anchor="middle">26</text>
<path d="M98.5 470.5V564M112.5 470.5V564M155.5 470.5V564M197.5 470.5V564M240.5 470.5V564M283.5 470.5V564M325.5 470.5V564M339.5 470.5V564M382.5 470.5V564M425.5 470.5V564M467.5 470.5V564M510.5 470.5V564M553.5 470.5V564M595.5 470.5V564M609.5 470.5V564M652.5 470.5V564M695.5 470.5V564M737.5 470.5V564M780.5 470.5V564M822.5 470.5V564M865.5 470.5V564" stroke="#808080" stroke-width="1" stroke-dasharray="3 3" fill="none"/>
<rect x="92.5" y="497.4" width="11" height="3.9" fill="#f01008" stroke="#000" stroke-width="1"/>
<rect x="106.5" y="497.4" width="11" height="6.9" fill="#f01008" stroke="#000" stroke-width="1"/>
<rect x="120.5" y="497.4" width="11" height="3.9" fill="#f01008" stroke="#000" stroke-width="1"/>
<rect x="135.5" y="497.4" width="11" height="0.9" fill="#f01008" stroke="#000" stroke-width="1"/>
<rect x="149.5" y="497.4" width="11" height="3.0" fill="#f01008" stroke="#000" stroke-width="1"/>
<rect x="163.5" y="497.4" width="11" height="3.0" fill="#f01008" stroke="#000" stroke-width="1"/>
<rect x="177.5" y="497.4" width="11" height="3.9" fill="#f01008" stroke="#000" stroke-width="1"/>
<rect x="191.5" y="497.4" width="11" height="7.8" fill="#f01008" stroke="#000" stroke-width="1"/>
<rect x="206.5" y="497.4" width="11" height="12.9" fill="#f01008" stroke="#000" stroke-width="1"/>
<rect x="220.5" y="497.4" width="11" height="17.7" fill="#f01008" stroke="#000" stroke-width="1"/>
<rect x="234.5" y="497.4" width="11" height="20.1" fill="#f01008" stroke="#000" stroke-width="1"/>
<rect x="248.5" y="497.4" width="11" height="21.0" fill="#f01008" stroke="#000" stroke-width="1"/>
<rect x="262.5" y="497.4" width="11" height="15.9" fill="#f01008" stroke="#000" stroke-width="1"/>
<rect x="277.5" y="497.4" width="11" height="9.9" fill="#f01008" stroke="#000" stroke-width="1"/>
<rect x="291.5" y="497.4" width="11" height="9.0" fill="#f01008" stroke="#000" stroke-width="1"/>
<rect x="305.5" y="497.4" width="11" height="6.9" fill="#f01008" stroke="#000" stroke-width="1"/>
<rect x="319.5" y="497.4" width="11" height="6.0" fill="#f01008" stroke="#000" stroke-width="1"/>
<rect x="333.5" y="497.4" width="11" height="1.2" fill="#f01008" stroke="#000" stroke-width="1"/>
<rect x="348.5" y="492.6" width="11" height="4.8" fill="#2a970a" stroke="#000" stroke-width="1"/>
<rect x="362.5" y="485.4" width="11" height="12.0" fill="#2a970a" stroke="#000" stroke-width="1"/>
<rect x="376.5" y="482.4" width="11" height="15.0" fill="#2a970a" stroke="#000" stroke-width="1"/>
<rect x="390.5" y="475.5" width="11" height="21.9" fill="#2a970a" stroke="#000" stroke-width="1"/>
<rect x="404.5" y="472.5" width="11" height="24.9" fill="#2a970a" stroke="#000" stroke-width="1"/>
<rect x="419.5" y="471.3" width="11" height="26.1" fill="#2a970a" stroke="#000" stroke-width="1"/>
<rect x="433.5" y="477.3" width="11" height="20.1" fill="#2a970a" stroke="#000" stroke-width="1"/>
<rect x="447.5" y="485.4" width="11" height="12.0" fill="#2a970a" stroke="#000" stroke-width="1"/>
<rect x="461.5" y="493.5" width="11" height="3.9" fill="#2a970a" stroke="#000" stroke-width="1"/>
<rect x="490.5" y="497.4" width="11" height="1.8" fill="#f01008" stroke="#000" stroke-width="1"/>
<rect x="504.5" y="497.4" width="11" height="6.9" fill="#f01008" stroke="#000" stroke-width="1"/>
<rect x="518.5" y="497.4" width="11" height="7.8" fill="#f01008" stroke="#000" stroke-width="1"/>
<rect x="532.5" y="497.4" width="11" height="18.9" fill="#f01008" stroke="#000" stroke-width="1"/>
<rect x="547.5" y="497.4" width="11" height="30.0" fill="#f01008" stroke="#000" stroke-width="1"/>
<rect x="561.5" y="497.4" width="11" height="33.0" fill="#f01008" stroke="#000" stroke-width="1"/>
<rect x="575.5" y="497.4" width="11" height="32.1" fill="#f01008" stroke="#000" stroke-width="1"/>
<rect x="589.5" y="497.4" width="11" height="39.0" fill="#f01008" stroke="#000" stroke-width="1"/>
<rect x="603.5" y="497.4" width="11" height="44.1" fill="#f01008" stroke="#000" stroke-width="1"/>
<rect x="618.5" y="497.4" width="11" height="48.0" fill="#f01008" stroke="#000" stroke-width="1"/>
<rect x="632.5" y="497.4" width="11" height="48.9" fill="#f01008" stroke="#000" stroke-width="1"/>
<rect x="646.5" y="497.4" width="11" height="51.0" fill="#f01008" stroke="#000" stroke-width="1"/>
<rect x="660.5" y="497.4" width="11" height="56.1" fill="#f01008" stroke="#000" stroke-width="1"/>
<rect x="674.5" y="497.4" width="11" height="59.1" fill="#f01008" stroke="#000" stroke-width="1"/>
<rect x="689.5" y="497.4" width="11" height="60.0" fill="#f01008" stroke="#000" stroke-width="1"/>
<rect x="703.5" y="497.4" width="11" height="59.1" fill="#f01008" stroke="#000" stroke-width="1"/>
<rect x="717.5" y="497.4" width="11" height="59.1" fill="#f01008" stroke="#000" stroke-width="1"/>
<rect x="731.5" y="497.4" width="11" height="59.1" fill="#f01008" stroke="#000" stroke-width="1"/>
<rect x="745.5" y="497.4" width="11" height="57.0" fill="#f01008" stroke="#000" stroke-width="1"/>
<rect x="760.5" y="497.4" width="11" height="51.9" fill="#f01008" stroke="#000" stroke-width="1"/>
<rect x="774.5" y="497.4" width="11" height="48.0" fill="#f01008" stroke="#000" stroke-width="1"/>
<rect x="788.5" y="497.4" width="11" height="44.1" fill="#f01008" stroke="#000" stroke-width="1"/>
<rect x="802.5" y="497.4" width="11" height="40.2" fill="#f01008" stroke="#000" stroke-width="1"/>
<rect x="816.5" y="497.4" width="11" height="33.9" fill="#f01008" stroke="#000" stroke-width="1"/>
<rect x="831.5" y="497.4" width="11" height="27.0" fill="#f01008" stroke="#000" stroke-width="1"/>
<rect x="845.5" y="497.4" width="11" height="21.9" fill="#f01008" stroke="#000" stroke-width="1"/>
<rect x="859.5" y="497.4" width="11" height="18.0" fill="#f01008" stroke="#000" stroke-width="1"/>
<rect x="873.5" y="497.4" width="11" height="17.1" fill="#f01008" stroke="#000" stroke-width="1"/>
<line x1="70.5" y1="497.4" x2="896" y2="497.4" stroke="#000" stroke-width="1.2"/>
<rect x="70.5" y="470" width="823.0" height="94" fill="none" stroke="#999" stroke-width="1"/>
<text x="67" y="482.3" text-anchor="end">0,63</text><text x="67" y="496.5" text-anchor="end">0</text><text x="67" y="565.3" text-anchor="end">-1,51</text>
<text x="898" y="477.5">Macd</text><text x="898" y="488.5">Forest</text><text x="898" y="499.7">26,12,26</text><text x="899.5" y="514.7" fill="#1a1aff">-0,4</text>
<path d="M98.5 573.5V667M112.5 573.5V667M155.5 573.5V667M197.5 573.5V667M240.5 573.5V667M283.5 573.5V667M325.5 573.5V667M339.5 573.5V667M382.5 573.5V667M425.5 573.5V667M467.5 573.5V667M510.5 573.5V667M553.5 573.5V667M595.5 573.5V667M609.5 573.5V667M652.5 573.5V667M695.5 573.5V667M737.5 573.5V667M780.5 573.5V667M822.5 573.5V667M865.5 573.5V667" stroke="#808080" stroke-width="1" stroke-dasharray="3 3" fill="none"/>
<rect x="78.5" y="620.2" width="11" height="8.1" fill="#f01878" stroke="#000" stroke-width="1"/>
<rect x="92.5" y="620.2" width="11" height="13.2" fill="#f01878" stroke="#000" stroke-width="1"/>
<rect x="106.5" y="615.6" width="11" height="4.6" fill="#2a6cf2" stroke="#000" stroke-width="1"/>
<rect x="120.5" y="600.4" width="11" height="19.8" fill="#2a6cf2" stroke="#000" stroke-width="1"/>
<rect x="135.5" y="605.5" width="11" height="14.7" fill="#2a6cf2" stroke="#000" stroke-width="1"/>
<rect x="149.5" y="620.2" width="11" height="18.3" fill="#f01878" stroke="#000" stroke-width="1"/>
<rect x="163.5" y="615.6" width="11" height="4.6" fill="#2a6cf2" stroke="#000" stroke-width="1"/>
<rect x="177.5" y="615.6" width="11" height="4.6" fill="#2a6cf2" stroke="#000" stroke-width="1"/>
<rect x="191.5" y="620.2" width="11" height="8.1" fill="#f01878" stroke="#000" stroke-width="1"/>
<rect x="206.5" y="610.6" width="11" height="9.6" fill="#2a6cf2" stroke="#000" stroke-width="1"/>
<rect x="220.5" y="620.2" width="11" height="8.1" fill="#f01878" stroke="#000" stroke-width="1"/>
<rect x="234.5" y="610.6" width="11" height="9.6" fill="#2a6cf2" stroke="#000" stroke-width="1"/>
<rect x="248.5" y="610.6" width="11" height="9.6" fill="#2a6cf2" stroke="#000" stroke-width="1"/>
<rect x="262.5" y="600.4" width="11" height="19.8" fill="#2a6cf2" stroke="#000" stroke-width="1"/>
<rect x="277.5" y="600.4" width="11" height="19.8" fill="#2a6cf2" stroke="#000" stroke-width="1"/>
<rect x="291.5" y="620.2" width="11" height="8.1" fill="#f01878" stroke="#000" stroke-width="1"/>
<rect x="305.5" y="605.5" width="11" height="14.7" fill="#2a6cf2" stroke="#000" stroke-width="1"/>
<rect x="319.5" y="620.2" width="11" height="8.1" fill="#f01878" stroke="#000" stroke-width="1"/>
<rect x="333.5" y="596.5" width="11" height="23.7" fill="#2a6cf2" stroke="#000" stroke-width="1"/>
<rect x="348.5" y="591.4" width="11" height="28.8" fill="#2a6cf2" stroke="#000" stroke-width="1"/>
<rect x="362.5" y="605.5" width="11" height="14.7" fill="#2a6cf2" stroke="#000" stroke-width="1"/>
<rect x="376.5" y="620.2" width="11" height="3.3" fill="#f01878" stroke="#000" stroke-width="1"/>
<rect x="390.5" y="591.4" width="11" height="28.8" fill="#2a6cf2" stroke="#000" stroke-width="1"/>
<rect x="404.5" y="615.7" width="11" height="4.5" fill="#2a6cf2" stroke="#000" stroke-width="1"/>
<rect x="419.5" y="620.2" width="11" height="3.3" fill="#f01878" stroke="#000" stroke-width="1"/>
<rect x="433.5" y="620.2" width="11" height="13.2" fill="#f01878" stroke="#000" stroke-width="1"/>
<rect x="447.5" y="620.2" width="11" height="13.2" fill="#f01878" stroke="#000" stroke-width="1"/>
<rect x="461.5" y="620.2" width="11" height="8.1" fill="#f01878" stroke="#000" stroke-width="1"/>
<rect x="475.5" y="615.6" width="11" height="4.6" fill="#2a6cf2" stroke="#000" stroke-width="1"/>
<rect x="490.5" y="610.6" width="11" height="9.6" fill="#2a6cf2" stroke="#000" stroke-width="1"/>
<rect x="504.5" y="620.2" width="11" height="8.1" fill="#f01878" stroke="#000" stroke-width="1"/>
<rect x="518.5" y="610.6" width="11" height="9.6" fill="#2a6cf2" stroke="#000" stroke-width="1"/>
<rect x="532.5" y="620.2" width="11" height="18.3" fill="#f01878" stroke="#000" stroke-width="1"/>
<rect x="547.5" y="620.2" width="11" height="8.1" fill="#f01878" stroke="#000" stroke-width="1"/>
<rect x="561.5" y="605.5" width="11" height="14.7" fill="#2a6cf2" stroke="#000" stroke-width="1"/>
<rect x="575.5" y="596.5" width="11" height="23.7" fill="#2a6cf2" stroke="#000" stroke-width="1"/>
<rect x="589.5" y="620.2" width="11" height="27.3" fill="#f01878" stroke="#000" stroke-width="1"/>
<rect x="603.5" y="620.2" width="11" height="8.1" fill="#f01878" stroke="#000" stroke-width="1"/>
<rect x="618.5" y="620.2" width="11" height="13.2" fill="#f01878" stroke="#000" stroke-width="1"/>
<rect x="632.5" y="615.6" width="11" height="4.6" fill="#2a6cf2" stroke="#000" stroke-width="1"/>
<rect x="646.5" y="620.2" width="11" height="8.1" fill="#f01878" stroke="#000" stroke-width="1"/>
<rect x="660.5" y="620.2" width="11" height="23.4" fill="#f01878" stroke="#000" stroke-width="1"/>
<rect x="674.5" y="620.2" width="11" height="3.3" fill="#f01878" stroke="#000" stroke-width="1"/>
<rect x="689.5" y="610.6" width="11" height="9.6" fill="#2a6cf2" stroke="#000" stroke-width="1"/>
<rect x="703.5" y="615.6" width="11" height="4.6" fill="#2a6cf2" stroke="#000" stroke-width="1"/>
<rect x="717.5" y="620.2" width="11" height="8.1" fill="#f01878" stroke="#000" stroke-width="1"/>
<rect x="731.5" y="620.2" width="11" height="8.1" fill="#f01878" stroke="#000" stroke-width="1"/>
<rect x="745.5" y="620.2" width="11" height="8.1" fill="#f01878" stroke="#000" stroke-width="1"/>
<rect x="760.5" y="615.6" width="11" height="4.6" fill="#2a6cf2" stroke="#000" stroke-width="1"/>
<rect x="774.5" y="620.2" width="11" height="13.2" fill="#f01878" stroke="#000" stroke-width="1"/>
<rect x="788.5" y="620.2" width="11" height="8.1" fill="#f01878" stroke="#000" stroke-width="1"/>
<rect x="802.5" y="615.6" width="11" height="4.6" fill="#2a6cf2" stroke="#000" stroke-width="1"/>
<rect x="816.5" y="615.6" width="11" height="4.6" fill="#2a6cf2" stroke="#000" stroke-width="1"/>
<rect x="831.5" y="620.2" width="11" height="3.3" fill="#f01878" stroke="#000" stroke-width="1"/>
<rect x="845.5" y="610.6" width="11" height="9.6" fill="#2a6cf2" stroke="#000" stroke-width="1"/>
<rect x="859.5" y="620.2" width="11" height="8.1" fill="#f01878" stroke="#000" stroke-width="1"/>
<rect x="873.5" y="620.2" width="11" height="8.1" fill="#f01878" stroke="#000" stroke-width="1"/>
<line x1="70.5" y1="620.2" x2="896" y2="620.2" stroke="#000" stroke-width="1.2"/>
<polyline points="71.0,615.9 84.5,615.9 98.5,615.9 112.5,615.9 126.5,615.9 141.5,615.9 155.5,615.9 169.5,615.9 183.5,615.9 197.5,615.9 212.5,615.9 226.5,615.9 240.5,615.9 254.5,615.9 268.5,613.5 283.5,610.5 297.5,612.9 311.5,612.9 325.5,615.6 339.5,612.4 354.5,608.4 368.5,606.6 382.5,608.4 396.5,606.6 410.5,607.8 425.5,610.5 439.5,615.9 453.5,615.9 467.5,615.9 481.5,615.9 496.5,615.9 510.5,615.9 524.5,615.9 538.5,615.9 553.5,615.9 567.5,615.9 581.5,615.9 595.5,615.9 609.5,615.9" fill="none" stroke="#2a970a" stroke-width="2" stroke-linejoin="round"/>
<polyline points="609.5,615.9 624.5,626.4" fill="none" stroke="#f01010" stroke-width="2" stroke-linejoin="round"/>
<polyline points="624.5,626.4 638.5,615.9 652.5,615.9" fill="none" stroke="#2a970a" stroke-width="2" stroke-linejoin="round"/>
<polyline points="652.5,615.9 666.5,628.5 680.5,630.0 695.5,627.0" fill="none" stroke="#f01010" stroke-width="2" stroke-linejoin="round"/>
<polyline points="695.5,627.0 709.5,615.9 723.5,615.9 737.5,615.9 751.5,615.9 766.5,615.9 780.5,615.9" fill="none" stroke="#2a970a" stroke-width="2" stroke-linejoin="round"/>
<polyline points="780.5,615.9 794.5,626.4" fill="none" stroke="#f01010" stroke-width="2" stroke-linejoin="round"/>
<polyline points="794.5,626.4 808.5,615.9 822.5,615.9 837.5,615.9 851.5,615.9 865.5,615.9 879.5,615.9" fill="none" stroke="#2a970a" stroke-width="2" stroke-linejoin="round"/>
<rect x="70.5" y="573" width="823.0" height="94" fill="none" stroke="#999" stroke-width="1"/>
<text x="67" y="584.5" text-anchor="end">10</text><text x="67" y="619.6" text-anchor="end">0</text><text x="67" y="667.6" text-anchor="end">-10</text>
<text x="898" y="580.3">ICV</text><text x="898" y="591.8">5, 3, 1</text><text x="899.5" y="614.8" fill="#1a1aff">1</text><text x="899.5" y="628.7" fill="#1a1aff">-2</text>
<path d="M98.5 676.5V770M112.5 676.5V770M155.5 676.5V770M197.5 676.5V770M240.5 676.5V770M283.5 676.5V770M325.5 676.5V770M339.5 676.5V770M382.5 676.5V770M425.5 676.5V770M467.5 676.5V770M510.5 676.5V770M553.5 676.5V770M595.5 676.5V770M609.5 676.5V770M652.5 676.5V770M695.5 676.5V770M737.5 676.5V770M780.5 676.5V770M822.5 676.5V770M865.5 676.5V770" stroke="#808080" stroke-width="1" stroke-dasharray="3 3" fill="none"/>
<line x1="70.5" y1="713.5" x2="893.5" y2="713.5" stroke="#f01010" stroke-width="1.2" stroke-dasharray="3 3"/>
<line x1="70.5" y1="732.5" x2="893.5" y2="732.5" stroke="#1a7a0a" stroke-width="1.2" stroke-dasharray="3 3"/>
<polyline points="71.0,679.0 84.5,681.4 98.6,684.4 112.4,687.4 126.5,688.9 140.6,687.4 155.0,684.4 169.0,683.0 183.0,684.4 197.3,686.5 211.4,691.6 225.8,697.6 240.0,705.4 254.0,710.5 268.0,709.3 282.5,701.5 296.6,692.5 310.7,687.0 325.5,687.0 339.6,687.0 354.0,685.0 368.4,683.0 382.5,684.0 396.6,686.0 411.0,687.0 425.4,683.8 439.5,684.4 453.6,688.6 468.0,698.5 482.0,707.5 496.5,712.0 510.6,710.5 525.0,708.7 539.0,713.0" fill="none" stroke="#2a970a" stroke-width="1.9" stroke-linejoin="round"/>
<polyline points="539.0,713.0 553.5,720.0 567.6,731.5" fill="none" stroke="#2a1a80" stroke-width="2" stroke-linejoin="round"/>
<polyline points="567.6,731.5 582.0,736.6 595.4,739.0 609.5,740.0 623.6,745.6 638.0,751.6 652.4,757.0 666.5,758.0 680.6,758.8 695.0,758.8 709.0,758.0 723.5,756.7 737.6,758.0 752.0,760.6 766.0,761.5 780.5,762.7 794.6,762.7 809.0,761.5 823.0,761.8 837.5,761.2 851.6,759.4 866.0,758.0 880.4,758.0" fill="none" stroke="#f01010" stroke-width="2" stroke-linejoin="round"/>
<polyline points="71.0,679.0 110.0,683.5 155.0,685.0 183.0,685.6 211.4,687.0 225.8,688.0 240.0,691.6 254.0,696.4 268.0,700.0 282.5,702.4 296.6,702.4 310.7,700.6 325.5,698.5 339.6,694.0 354.0,690.0 368.4,686.5 382.5,684.4 411.0,684.4 439.5,684.4 453.6,686.0 468.0,688.6 482.0,692.0 496.5,695.5 510.6,700.0 525.0,704.5 539.0,708.4 553.5,712.0 567.6,715.6 582.0,720.0 595.4,724.5 609.5,730.0 623.6,735.0 638.0,740.0 652.4,744.4 666.5,748.6 680.6,752.0 695.0,755.0 709.0,756.7 723.5,757.6 737.6,758.0 752.0,758.8 766.0,759.7 780.5,760.6 794.6,761.5 809.0,761.8 823.0,762.0 837.5,761.8 851.6,761.2 866.0,760.6 880.4,759.7" fill="none" stroke="#c8c8c8" stroke-width="2" stroke-dasharray="6 3"/>
<rect x="70.5" y="676" width="823.0" height="94" fill="none" stroke="#999" stroke-width="1"/>
<text x="67" y="687.4" text-anchor="end">100</text><text x="67" y="712.6" text-anchor="end">60</text><text x="67" y="731.5" text-anchor="end">40</text><text x="67" y="770.5" text-anchor="end">0</text>
<text x="898" y="683.2">EST. %</text><text x="898" y="694.5">FULL</text><text x="898" y="705.5">(28,3,6)</text><text x="899.5" y="757" fill="#1a1aff">14,25</text>
<text x="80.5" y="481.5" font-size="12.3" fill="#c4c4c4">Histgrama MACD</text>
<text x="80.5" y="584.5" font-size="12.3" fill="#c4c4c4">Indice Calidad Vela</text>
<text x="81" y="687.5" font-size="12.3" fill="#c4c4c4">Full Estocastico</text>
</svg><div class="radio" style="left:962px;top:15px"></div>
<div class="radio" style="left:962px;top:465.700px"></div>
<div class="radio" style="left:962px;top:573px"><div style="position:absolute;left:3px;top:3px;width:6px;height:6px;border-radius:50%;background:#111"></div></div>
<div class="radio" style="left:962px;top:675.700px"></div>
<div class="sb" style="top:36px"><svg width="31" height="20" viewBox="0 0 31 21"><circle cx="13.200" cy="8" r="4" fill="#dcdcdc" stroke="#2a2a2a" stroke-width="1.4"/><path d="M16.300 11.2L21.600 16.200" stroke="#2a2a2a" stroke-width="1.8" stroke-linecap="round"/></svg></div>
<div class="sb" style="top:61px"><svg width="31" height="20" viewBox="0 0 31 21"><rect x="0" y="0" width="31" height="20" fill="#f6f0f4"/><path d="M1 20V3L3 8L4 20ZM4.5 20V9H7L8 20ZM10 20L12 9L13.5 4L15 12L16 20ZM23 20L25 13L26.5 10L28 14L29 20Z" fill="#4848b0"/><path d="M3.5 2V20M18.5 0V20" stroke="#9090c8" stroke-width="1"/><path d="M1 4L3 8L5 8.5L9 8L12 8L14 6.5L16 8L19 7.5L21 9L23 11L25 8L27 7.5L29 8.5" fill="none" stroke="#e01010" stroke-width="1"/></svg></div>
<div class="sb" style="top:85px"><svg width="31" height="20" viewBox="0 0 31 21"><path d="M4 10H27" stroke="#e62020" stroke-width="2.4"/></svg></div>
<div class="sb" style="top:110px"><svg width="31" height="20" viewBox="0 0 31 21"><path d="M4 10H27" stroke="#2030f0" stroke-width="2.4"/></svg></div>
<div class="sb" style="top:135px"><svg width="31" height="20" viewBox="0 0 31 21"><path d="M4 15.5L19.5 1M12 20.5L27 5.5" stroke="#222" stroke-width="1"/><path d="M9 11.5L12 20L15 8.5L19 14.5L20 2L26.5 6" fill="none" stroke="#3030e0" stroke-width="1"/></svg></div>
<div class="sb" style="top:160px"><svg width="31" height="20" viewBox="0 0 31 21"><path d="M5 21L27 0" stroke="#222" stroke-width="1.6"/><path d="M8 13.5L14 14.5L13 18.5M14 14.5L10 16" fill="none" stroke="#2020e0" stroke-width="1.3"/><path d="M19 1L20 6.5L25 5.5M20 6.5L23 3" fill="none" stroke="#2020e0" stroke-width="1.3"/></svg></div>
<div class="sb" style="top:185px"><svg width="31" height="20" viewBox="0 0 31 21"><path d="M5 21L27 0" stroke="#222" stroke-width="1.6"/><path d="M8 13.5L14 14.5L13 18.5" fill="none" stroke="#2020e0" stroke-width="1.3"/><path d="M19 1L20 6.5L25 5.5" fill="none" stroke="#2020e0" stroke-width="1.3"/><path d="M12 4.5H6L9.5 8L6 11.5H12" fill="none" stroke="#e01030" stroke-width="1.5"/></svg></div>
<div class="sb" style="top:210px"><svg width="31" height="20" viewBox="0 0 31 21"><path d="M15 4.8H18.2V8.600H21.3L16.600 15.4L11.9 8.600H15Z" fill="#f01808"/></svg></div>
<div class="sb" style="top:235px"><svg width="31" height="20" viewBox="0 0 31 21"><path d="M15 15.4H18.2V12.3H21.3L16.600 4.8L11.9 12.3H15Z" fill="#1010f8"/></svg></div>
<div class="sb" style="top:260px"><svg width="31" height="20" viewBox="0 0 31 21"><path d="M7 6.5H9V9.5H12V11.5H9V14.5H7V11.5H4V9.5H7Z" fill="#9ad060" stroke="#5aa020" stroke-width="0.8"/><path d="M17 6H21V9.5H24.5L19 15L13.5 9.5H17Z" fill="#e01808"/><circle cx="27.5" cy="15" r="2.3" fill="#fff" stroke="#e01010" stroke-width="0.9"/></svg></div>
<div class="sb" style="top:285px"><svg width="31" height="20" viewBox="0 0 31 21"><path d="M4 6H27M4 11H27M4 16H27" stroke="#333" stroke-width="2" stroke-dasharray="7 2"/></svg></div>
<div class="sb" style="top:311px"><svg width="31" height="20" viewBox="0 0 31 21"><path d="M3 2H18M3 18.5H18" stroke="#1010f0" stroke-width="1.2"/><path d="M10.5 4V17" stroke="#1010f0" stroke-width="1.2"/><path d="M7.5 6.5L10.5 2.5L13.5 6.5ZM7.5 14L10.5 18L13.5 14Z" fill="#1010f0"/><text transform="translate(19.5 17) scale(0.78 1.3)" font-family="Liberation Sans, sans-serif" font-size="13" fill="#111">%</text></svg></div>
<div class="sb" style="top:335px"><svg width="31" height="20" viewBox="0 0 31 21"><path d="M5 4.5H17" stroke="#2a6cf0" stroke-width="1.2"/><path d="M5 10.5H17" stroke="#111" stroke-width="1.4"/><path d="M5 16H17" stroke="#f04030" stroke-width="1.6"/><text transform="translate(19 17) scale(0.78 1.3)" font-family="Liberation Sans, sans-serif" font-size="13" fill="#111">%</text></svg></div>
<div class="sb" style="top:361px"><svg width="31" height="20" viewBox="0 0 31 21"><rect x="7" y="1" width="18" height="19" fill="#dcdce8"/><circle cx="16" cy="10.5" r="7.2" fill="#e8c8cc" stroke="#c02028" stroke-width="2.4"/><path d="M10.8 5.5L21.2 15.5" stroke="#c02028" stroke-width="2.4"/></svg></div>
<div class="sb" style="top:385px"><svg width="31" height="20" viewBox="0 0 31 21"><defs><radialGradient id="rd"><stop offset="0" stop-color="#ffd0d0"/><stop offset="0.45" stop-color="#f04040"/><stop offset="1" stop-color="#f00008"/></radialGradient></defs><circle cx="15.5" cy="10" r="6" fill="url(#rd)"/></svg></div>
<div class="sb" style="top:408px"><svg width="31" height="20" viewBox="0 0 31 21"><path d="M10 8Q14 3.5 19 6L20 3.5L22 9.5L15.5 9.5L17.5 7.8Q14 6.5 10 8Z" fill="#1a5ae0" stroke="#1a5ae0" stroke-width="0.8" stroke-linejoin="round"/><path d="M21 12.5Q17 17 12 14.5L11 17L9 11L15.5 11L13.5 12.7Q17 14 21 12.5Z" fill="#1a5ae0" stroke="#1a5ae0" stroke-width="0.8" stroke-linejoin="round"/></svg></div>
<div class="sb" style="top:487px"><svg width="31" height="20" viewBox="0 0 31 21"><path d="M7.3 4.9H11.7V9.1H14.9L9.5 15.4L4.1 9.1H7.3Z" fill="#e01808"/><path d="M20.5 15H25V11.1H28.4L22.7 4.9L17 11.1H20.5Z" fill="#78c040"/></svg></div>
<div class="sb" style="top:513px"><svg width="31" height="20" viewBox="0 0 31 21"><path d="M5 4.5H17" stroke="#2a6cf0" stroke-width="1.2"/><path d="M5 10.5H17" stroke="#111" stroke-width="1.4"/><path d="M5 16H17" stroke="#f04030" stroke-width="1.6"/><text transform="translate(19 17) scale(0.78 1.3)" font-family="Liberation Sans, sans-serif" font-size="13" fill="#111">%</text></svg></div>
<div class="sb" style="top:541px"><svg width="31" height="20" viewBox="0 0 31 21"><path d="M2 13.500H29" stroke="#2a9a0a" stroke-width="0.8" stroke-dasharray="3 2"/><path d="M23.500 14V19" stroke="#5050c0" stroke-width="0.6"/><path d="M2 4Q8 6 13.500 17.500Q18 14 23.500 0" fill="none" stroke="#1010f0" stroke-width="1.8"/><path d="M2 3Q9 4 16 16Q22 14 27.500 0" fill="none" stroke="#e01818" stroke-width="1.8"/></svg></div>
<div class="sb" style="top:595.5px"><svg width="31" height="20" viewBox="0 0 31 21"><path d="M7.3 4.9H11.7V9.1H14.9L9.5 15.4L4.1 9.1H7.3Z" fill="#e01808"/><path d="M20.5 15H25V11.1H28.4L22.7 4.9L17 11.1H20.5Z" fill="#78c040"/></svg></div>
<div class="sb" style="top:619.5px"><svg width="31" height="20" viewBox="0 0 31 21"><path d="M5 4.5H17" stroke="#2a6cf0" stroke-width="1.2"/><path d="M5 10.5H17" stroke="#111" stroke-width="1.4"/><path d="M5 16H17" stroke="#f04030" stroke-width="1.6"/><text transform="translate(19 17) scale(0.78 1.3)" font-family="Liberation Sans, sans-serif" font-size="13" fill="#111">%</text></svg></div>
<div class="sb" style="top:643px"><svg width="31" height="20" viewBox="0 0 31 21"><path d="M2 13.500H29" stroke="#2a9a0a" stroke-width="0.8" stroke-dasharray="3 2"/><path d="M23.500 14V19" stroke="#5050c0" stroke-width="0.6"/><path d="M2 4Q8 6 13.500 17.500Q18 14 23.500 0" fill="none" stroke="#1010f0" stroke-width="1.8"/><path d="M2 3Q9 4 16 16Q22 14 27.500 0" fill="none" stroke="#e01818" stroke-width="1.8"/></svg></div>
<div class="sb" style="top:697px"><svg width="31" height="20" viewBox="0 0 31 21"><path d="M7.3 4.9H11.7V9.1H14.9L9.5 15.4L4.1 9.1H7.3Z" fill="#e01808"/><path d="M20.5 15H25V11.1H28.4L22.7 4.9L17 11.1H20.5Z" fill="#78c040"/></svg></div>
<div class="sb" style="top:722px"><svg width="31" height="20" viewBox="0 0 31 21"><path d="M5 4.5H17" stroke="#2a6cf0" stroke-width="1.2"/><path d="M5 10.5H17" stroke="#111" stroke-width="1.4"/><path d="M5 16H17" stroke="#f04030" stroke-width="1.6"/><text transform="translate(19 17) scale(0.78 1.3)" font-family="Liberation Sans, sans-serif" font-size="13" fill="#111">%</text></svg></div>
<div class="sb" style="top:747px"><svg width="31" height="20" viewBox="0 0 31 21"><path d="M2 13.500H29" stroke="#2a9a0a" stroke-width="0.8" stroke-dasharray="3 2"/><path d="M23.500 14V19" stroke="#5050c0" stroke-width="0.6"/><path d="M2 4Q8 6 13.500 17.500Q18 14 23.500 0" fill="none" stroke="#1010f0" stroke-width="1.8"/><path d="M2 3Q9 4 16 16Q22 14 27.500 0" fill="none" stroke="#e01818" stroke-width="1.8"/></svg></div>
<div class="status" style="left:20.5px">US Bancorp (USB)</div>
<div class="status" style="left:305.5px;color:#1414f0;letter-spacing:0.26px">/Users/mserra/Library/CloudStorage/Dropbox/WorkDB/DatosBolsa/Configs/Config.DEFAULT.xml</div>
<div class="abs" style="left:919px;top:776px;width:65px;height:17px;background:#ee0008;border:1px solid #b0b0b0;color:#fff;font-size:11px;line-height:17px"><span style="position:absolute;left:4px;top:1px">OFF</span></div>
</body></html>
